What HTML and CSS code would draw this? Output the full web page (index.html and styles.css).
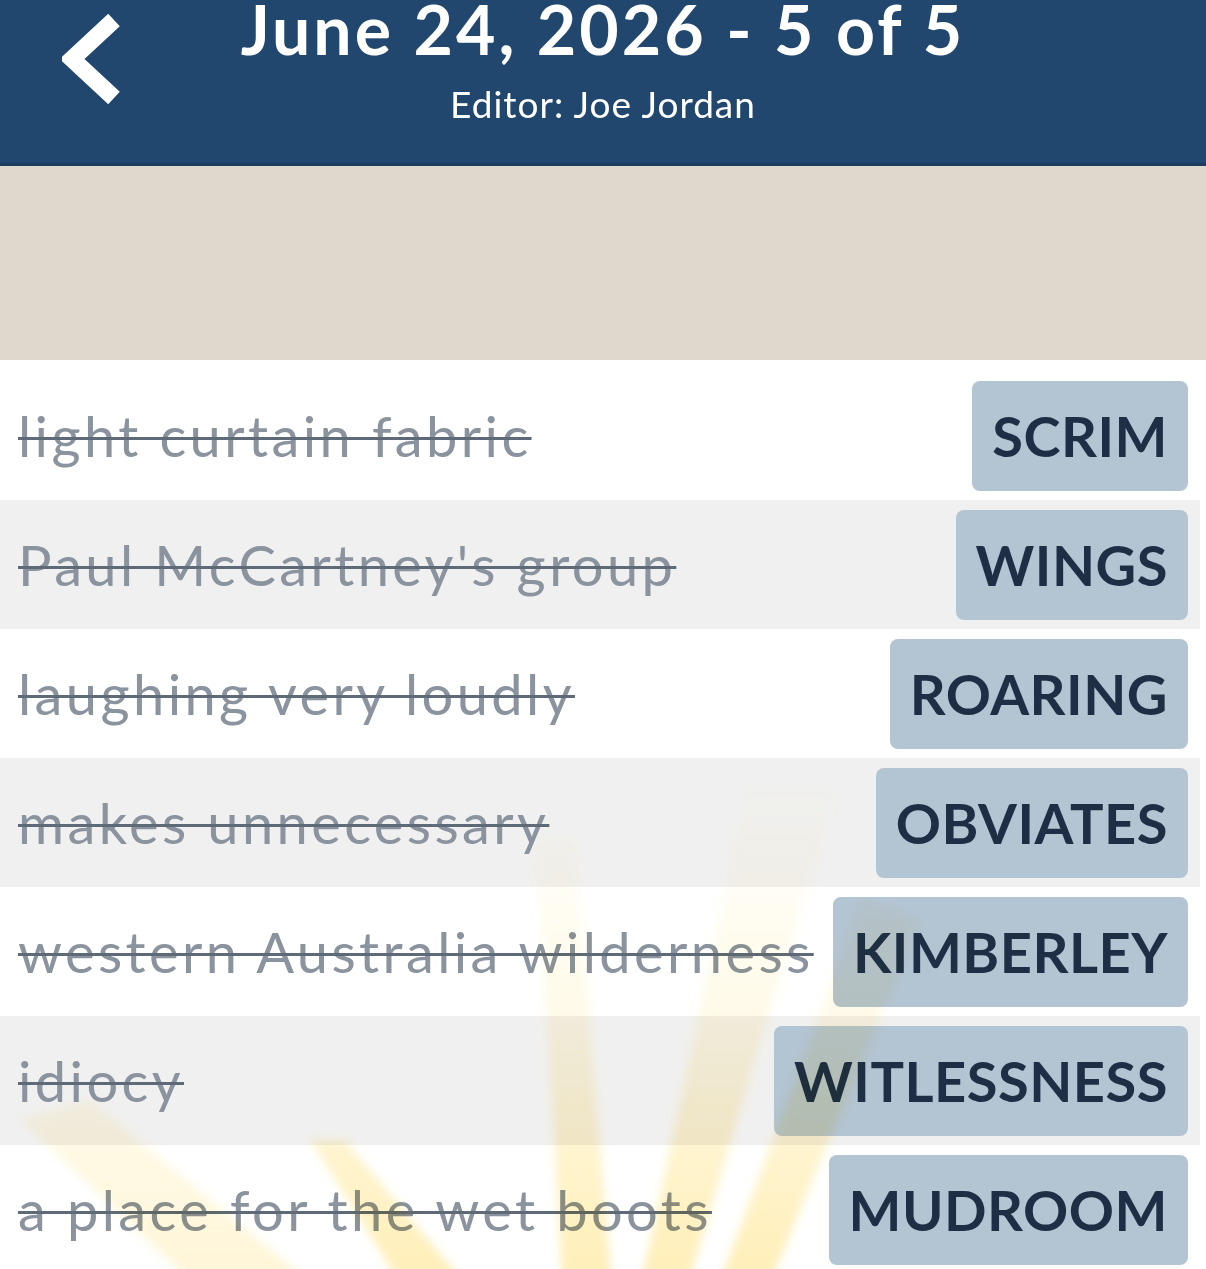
FILE: index.html
```html
<!DOCTYPE html>
<html lang="en">
<head>
    <meta charset="UTF-8">
    <meta name="viewport" content="width=device-width, initial-scale=1.0">
    <title>June 24, 2026 - 5 of 5</title>
    <link rel="stylesheet" href="styles.css">
</head>
<body>
    <!-- header -->
    <header class="top-bar">
        <a href="#" class="back-btn" aria-label="Back">
            <svg viewBox="0 0 60 90" width="60" height="90">
                <polyline points="52,6 10,45 52,84" fill="none" stroke="#fff" stroke-width="17" stroke-linejoin="miter"/>
            </svg>
        </a>
        <div class="title-block">
            <h1>June 24, 2026 - 5 of 5</h1>
            <p class="editor">Editor: Joe Jordan</p>
        </div>
    </header>

    <!-- ad / banner space -->
    <div class="banner"></div>

    <!-- solved clues -->
    <div class="clue-list">
        <div class="clue-row">
            <span class="clue">light curtain fabric</span>
            <span class="answer">SCRIM</span>
        </div>
        <div class="clue-row">
            <span class="clue">Paul McCartney's group</span>
            <span class="answer">WINGS</span>
        </div>
        <div class="clue-row">
            <span class="clue">laughing very loudly</span>
            <span class="answer">ROARING</span>
        </div>
        <div class="clue-row">
            <span class="clue">makes unnecessary</span>
            <span class="answer">OBVIATES</span>
        </div>
        <div class="clue-row">
            <span class="clue">western Australia wilderness</span>
            <span class="answer">KIMBERLEY</span>
        </div>
        <div class="clue-row">
            <span class="clue">idiocy</span>
            <span class="answer">WITLESSNESS</span>
        </div>
        <div class="clue-row">
            <span class="clue">a place for the wet boots</span>
            <span class="answer">MUDROOM</span>
        </div>

        <!-- sunburst behind the puzzle -->
        <svg class="sunburst" viewBox="0 0 1206 909">
            <defs>
                <linearGradient id="fade" gradientUnits="userSpaceOnUse" x1="0" y1="420" x2="0" y2="909">
                    <stop offset="0" stop-color="#ffd446" stop-opacity="0"/>
                    <stop offset="0.5" stop-color="#ffd446" stop-opacity="0.13"/>
                    <stop offset="1" stop-color="#ffd446" stop-opacity="0.38"/>
                </linearGradient>
                <filter id="soft" x="-20%" y="-20%" width="140%" height="140%">
                    <feGaussianBlur stdDeviation="5"/>
                </filter>
            </defs>
            <g fill="url(#fade)" filter="url(#soft)">
                <polygon points="535,480 575,480 612,930 563,930"/>
                <polygon points="748,420 840,420 686,930 640,930"/>
                <polygon points="862,540 920,560 767,930 717,930"/>
                <polygon points="310,780 345,780 470,930 405,930"/>
            </g>
            <g fill="url(#fade)" opacity="0.55" filter="url(#soft)">
                <polygon points="20,760 90,740 320,930 200,930"/>
            </g>
        </svg>
    </div>
</body>
</html>
```

FILE: styles.css
```css
/* base */
body {
    margin: 0;
    background: #ffffff;
    font-family: 'Lato', 'Open Sans', sans-serif;
    color: #1e2f45;
    overflow: hidden;
}

/* header */
.top-bar {
    display: grid;
    grid-template-columns: 1fr auto 1fr;
    height: 163px;
    background: #21476f;
    border-bottom: 3px solid #1c3d60;
    color: #ffffff;
}

.back-btn {
    justify-self: start;
    align-self: start;
    margin: 14px 0 0 62px;
    display: flex;
}

.title-block {
    text-align: center;
}

h1 {
    margin: -11px 0 0;
    font-size: 68px;
    font-weight: 700;
    line-height: 80px;
    letter-spacing: 3px;
}

.editor {
    margin: 13px 0 0;
    font-size: 37px;
    line-height: 44px;
    letter-spacing: 1px;
}

/* banner */
.banner {
    height: 194px;
    background: #ded8cd;
}

/* list of clues */
.clue-list {
    position: relative;
    width: 1200px;
    padding-top: 11px;
}

.clue-row {
    display: flex;
    align-items: center;
    justify-content: space-between;
    height: 129px;
    padding: 0 12px 0 18px;
    box-sizing: border-box;
}

.clue-row:nth-child(even) {
    background: #f0f0f0;
}

.clue {
    font-size: 56px;
    letter-spacing: 3.4px;
    color: #8a939e;
    text-decoration: line-through;
    text-decoration-color: #5e6a77;
    text-decoration-thickness: 3px;
    white-space: nowrap;
}

.answer {
    display: flex;
    align-items: center;
    height: 110px;
    padding: 0 20px;
    border-radius: 8px;
    background: #b3c4d3;
    font-size: 56px;
    font-weight: 700;
    letter-spacing: 0.5px;
    color: #1e2f45;
}

/* decoration over the list */
.sunburst {
    position: absolute;
    left: 0;
    top: 0;
    width: 1206px;
    height: 909px;
    pointer-events: none;
    mix-blend-mode: multiply;
}
```
